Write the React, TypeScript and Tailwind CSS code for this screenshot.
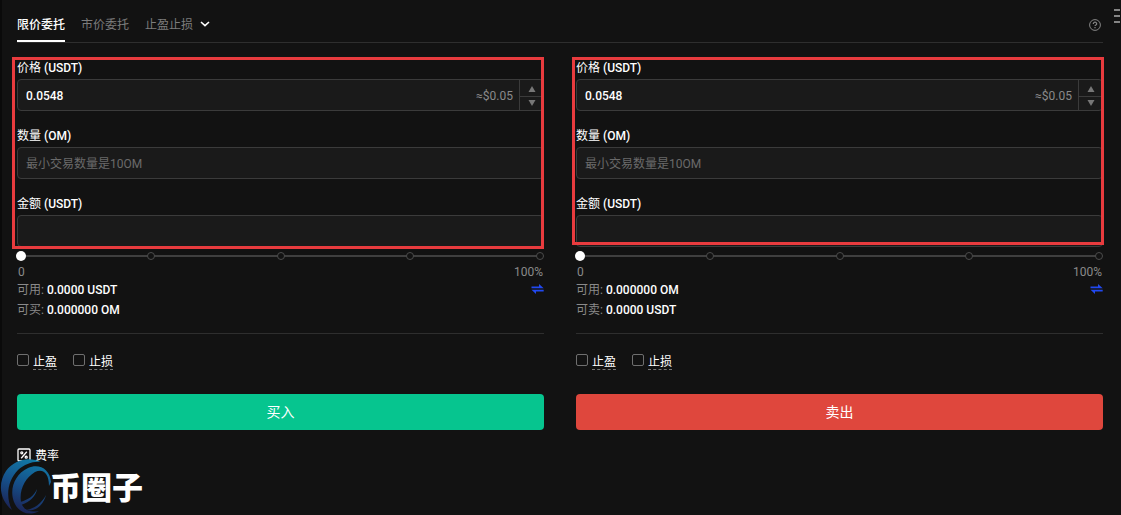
import { useState } from "react";

type Side = {
  id: string;
  spend: string;
  gainLabel: string;
  gain: string;
  action: string;
  buttonClass: string;
  frameClass: string;
};

const sides: Side[] = [
  {
    id: "buy",
    spend: "0.0000 USDT",
    gainLabel: "可买:",
    gain: "0.000000 OM",
    action: "买入",
    buttonClass: "bg-[#06c58f]",
    frameClass: "-left-[5px] right-0 top-0 -bottom-[2px]",
  },
  {
    id: "sell",
    spend: "0.000000 OM",
    gainLabel: "可卖:",
    gain: "0.0000 USDT",
    action: "卖出",
    buttonClass: "bg-[#df473d]",
    frameClass: "-left-1 -right-px top-0 bottom-[2px]",
  },
];

const inputClass =
  "block h-8 w-full rounded border border-[#3b3b3b] bg-[#1a1a1a] px-2 pt-[2px] text-xs font-medium text-white outline-none placeholder:font-normal placeholder:text-[#6a6a6a]";
const labelClass = "block h-[22px] text-xs leading-[22px] text-white";

function Frame({ className }: { className: string }) {
  return <div className={`pointer-events-none absolute border-3 border-[#e83b3e] ${className}`} />;
}

function Check({ id, label }: { id: string; label: string }) {
  return (
    <div className="flex items-start gap-1">
      <input
        id={id}
        type="checkbox"
        className="mt-[2px] size-3 appearance-none rounded-xs border border-[#6f6f6f] checked:bg-white"
      />
      <label
        htmlFor={id}
        className="border-b border-dashed border-[#777777] pt-[3px] text-xs leading-[14px] text-white"
      >
        {label}
      </label>
    </div>
  );
}

function OrderForm({ side }: { side: Side }) {
  const [price, setPrice] = useState("0.0548");
  const [percent, setPercent] = useState(0);
  const step = (delta: number) => setPrice((Number(price) + delta).toFixed(4));

  return (
    <form className="min-w-0 flex-1" onSubmit={(e) => e.preventDefault()}>
      <div className="relative flex flex-col gap-[14px]">
        <div>
          <label htmlFor={`${side.id}-price`} className={labelClass}>
            价格 <span className="font-medium">(USDT)</span>
          </label>
          <div className="flex h-8 overflow-hidden rounded border border-[#3b3b3b] bg-[#1a1a1a]">
            <input
              id={`${side.id}-price`}
              value={price}
              onChange={(e) => setPrice(e.target.value)}
              className="min-w-0 flex-1 bg-transparent px-2 pt-[2px] text-xs font-medium text-white outline-none"
            />
            <span className="pt-px pr-[6px] text-xs leading-[30px] text-[#8a8a8a]">≈$0.05</span>
            <div className="flex w-6 flex-col border-l border-[#3b3b3b] text-[#777777]">
              <button
                type="button"
                aria-label="增加"
                onClick={() => step(0.0001)}
                className="flex flex-1 items-center justify-center border-b border-[#3b3b3b] pt-[2px]"
              >
                <svg viewBox="0 0 8 6" className="h-[6px] w-2" fill="currentColor">
                  <path d="M4 0 7.5 6H.5z" />
                </svg>
              </button>
              <button
                type="button"
                aria-label="减少"
                onClick={() => step(-0.0001)}
                className="flex flex-1 items-center justify-center"
              >
                <svg viewBox="0 0 8 6" className="h-[6px] w-2" fill="currentColor">
                  <path d="M4 6 7.5 0H.5z" />
                </svg>
              </button>
            </div>
          </div>
        </div>
        <div>
          <label htmlFor={`${side.id}-amount`} className={labelClass}>
            数量 <span className="font-medium">(OM)</span>
          </label>
          <input id={`${side.id}-amount`} placeholder="最小交易数量是10OM" className={inputClass} />
        </div>
        <div>
          <label htmlFor={`${side.id}-total`} className={labelClass}>
            金额 <span className="font-medium">(USDT)</span>
          </label>
          <input id={`${side.id}-total`} className={inputClass} />
        </div>
        <Frame className={side.frameClass} />
      </div>

      <div className="relative flex h-[18px] items-center">
        <div className="absolute inset-x-1 h-[2px] bg-[#3f3f3f]" />
        <div className="relative flex flex-1 justify-between">
          {[0, 25, 50, 75, 100].map((mark) => (
            <span key={mark} className="size-2 rounded-full border border-[#4c4c4c] bg-[#121212]" />
          ))}
        </div>
        <input
          type="range"
          aria-label="百分比"
          min={0}
          max={100}
          value={percent}
          onChange={(e) => setPercent(Number(e.target.value))}
          className="absolute inset-y-0 -inset-x-px appearance-none bg-transparent [&::-webkit-slider-thumb]:size-[10px] [&::-webkit-slider-thumb]:appearance-none [&::-webkit-slider-thumb]:rounded-full [&::-webkit-slider-thumb]:bg-white"
        />
      </div>
      <div className="flex justify-between px-px text-xs leading-[15px] text-[#8a8a8a]">
        <span>0</span>
        <span>100%</span>
      </div>
      <div className="flex items-center justify-between text-xs leading-5">
        <p className="text-[#8a8a8a]">
          可用: <span className="font-medium text-white">{side.spend}</span>
        </p>
        <button type="button" aria-label="划转" className="pb-[2px] text-[#2148f0]">
          <svg viewBox="0 0 13 10" className="h-[10px] w-[13px]" fill="currentColor">
            <path d="M.5 2.4H8V0L12.7 4.2H.5zM12.7 7.6H5V10L.5 5.8h12.2z" />
          </svg>
        </button>
      </div>
      <p className="text-xs leading-5 text-[#8a8a8a]">
        {side.gainLabel} <span className="font-medium text-white">{side.gain}</span>
      </p>

      <div className="mt-[13px] flex gap-4 border-t border-[#2e2e2e] pt-[18px]">
        <Check id={`${side.id}-tp`} label="止盈" />
        <Check id={`${side.id}-sl`} label="止损" />
      </div>
      <button type="submit" className={`mt-6 h-9 w-full rounded text-sm text-white ${side.buttonClass}`}>
        {side.action}
      </button>
    </form>
  );
}

function Watermark() {
  return (
    <div className="pointer-events-none absolute top-[456px] left-0 flex items-center text-white">
      <svg viewBox="2 -2 48 59" className="h-[59px] w-12 overflow-visible">
        <defs>
          <linearGradient id="swirl" gradientUnits="userSpaceOnUse" x1="36" y1="2" x2="18" y2="56">
            <stop offset="0" stopColor="#117aa6" />
            <stop offset="0.5" stopColor="#164e88" />
            <stop offset="1" stopColor="#1c1f50" />
          </linearGradient>
        </defs>
        <g fill="url(#swirl)">
          <path d="M41 4C29-2 14 2 6 13-2 25-1 41 12 52 5 38 8 22 18 12 25 6 33 3 41 4z" />
          <path d="M51 24C50 11 39 5 28 10 15 16 9 31 14 44c4 10 14 15 25 9-9 2-16-1-18-9-2-12 4-24 14-30 8-4 14 1 14 14z" />
          <path d="M20 44c8-2 14-6 17-13-1 7-7 13-16 16zM46 37c-4 8-12 14-20 15 9 2 17-4 20-15z" />
        </g>
      </svg>
      <span className="font-['Noto_Sans_CJK_SC',sans-serif] text-[31px] leading-none font-black">币圈子</span>
    </div>
  );
}

export default function App() {
  return (
    <div className="relative min-h-screen border-l-2 border-[#0a0a0a] bg-[#121212] pr-[18px] pl-[15px] font-['Roboto','Noto_Sans_CJK_SC',sans-serif] text-white">
      <header className="flex h-[43px] items-stretch justify-between border-b border-[#2e2e2e]">
        <nav className="flex gap-4 text-xs text-[#7d7d7d]">
          <a href="#limit" className="flex items-center border-b-2 border-white pt-[9px] font-medium text-white">
            限价委托
          </a>
          <a href="#market" className="flex items-center pt-[7px]">
            市价委托
          </a>
          <button type="button" className="flex items-center gap-2 pt-[7px]">
            止盈止损
            <svg viewBox="0 0 8 6" className="mb-[2px] h-[6px] w-2 overflow-visible" fill="none" stroke="#fff" strokeWidth="1.6">
              <path d="M0 1 4 4.6 8 1" />
            </svg>
          </button>
        </nav>
        <button type="button" aria-label="帮助" className="mr-[2px] pt-[7px] text-[#858585]">
          <svg viewBox="0 0 12 12" className="size-3" fill="none" stroke="currentColor">
            <circle cx="6" cy="6" r="5.4" />
            <path strokeWidth="1.2" d="M4.3 4.9c0-2.3 3.4-2.3 3.4 0 0 1-1.7 1-1.7 2.1M6 8v1.2" />
          </svg>
        </button>
      </header>
      <button type="button" aria-label="菜单" className="absolute top-[9px] right-px text-[#858585]">
        <svg viewBox="0 0 6 14" className="h-[14px] w-[6px]" fill="currentColor">
          <path d="M0 0h6v2H0zM0 6h6v2H0zM0 12h6v2H0z" />
        </svg>
      </button>

      <main className="flex gap-8 pt-[14px]">
        {sides.map((side) => (
          <OrderForm key={side.id} side={side} />
        ))}
      </main>

      <footer className="pt-[14px]">
        <a href="#fees" className="inline-flex items-center gap-1 text-xs leading-5 text-white">
          <svg viewBox="0 0 14 14" className="size-[14px]" fill="none" stroke="currentColor" strokeWidth="1.3">
            <rect x="1" y="1" width="12" height="12" rx="1" />
            <path d="M9.8 3.8 4.2 10.2" />
            <circle cx="4.8" cy="4.8" r="1" />
            <circle cx="9.2" cy="9.2" r="1" />
          </svg>
          <span className="pt-[2px]">费率</span>
        </a>
      </footer>
      <Watermark />
    </div>
  );
}
